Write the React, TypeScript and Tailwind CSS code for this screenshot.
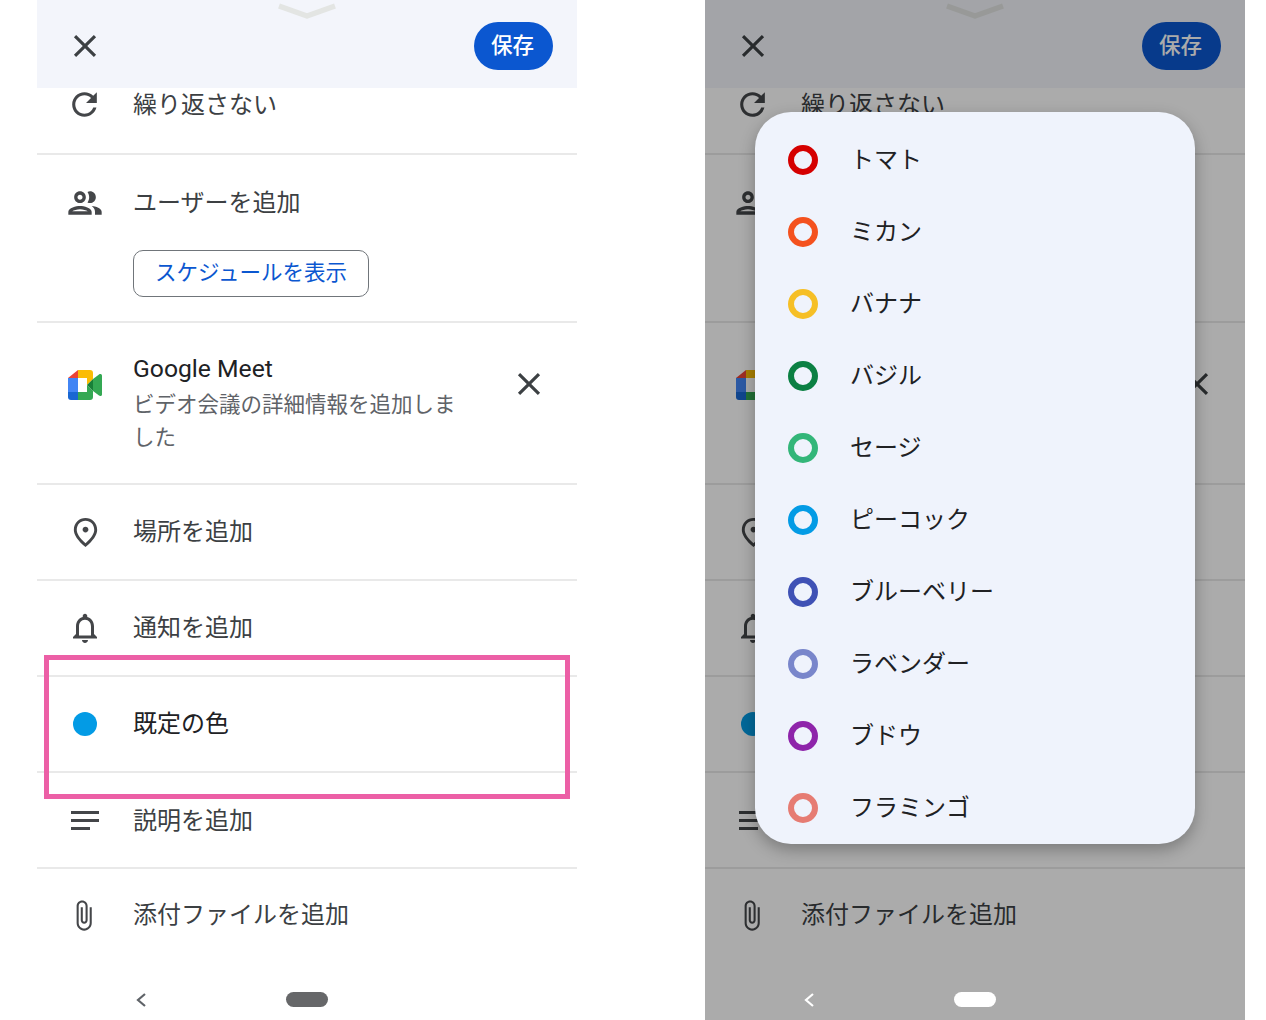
import React from "react";

const FONT = "font-['Roboto','Noto_Sans_CJK_JP',sans-serif]";

function Mi({ d, size, className = "" }: { d: string; size: number; className?: string }) {
  return (
    <svg width={size} height={size} viewBox="0 0 24 24" fill="currentColor" className={`shrink-0 ${className}`}>
      <path d={d} />
    </svg>
  );
}

const P = {
  close: "M19 6.41L17.59 5 12 10.59 6.41 5 5 6.41 10.59 12 5 17.59 6.41 19 12 13.41 17.59 19 19 17.59 13.41 12z",
  refresh:
    "M17.65 6.35C16.2 4.9 14.21 4 12 4c-4.42 0-7.99 3.58-7.99 8s3.57 8 7.99 8c3.73 0 6.84-2.55 7.73-6h-2.08c-.82 2.33-3.04 4-5.65 4-3.31 0-6-2.69-6-6s2.69-6 6-6c1.66 0 3.14.69 4.22 1.78L13 11h7V4l-2.35 2.35z",
  group:
    "M9 13.75c-2.34 0-7 1.17-7 3.5V19h14v-1.75c0-2.33-4.66-3.5-7-3.5zM4.34 17c.84-.58 2.87-1.25 4.66-1.25s3.82.67 4.66 1.25H4.34zM9 12c1.93 0 3.5-1.57 3.5-3.5S10.93 5 9 5 5.5 6.57 5.5 8.5 7.07 12 9 12zm0-5c.83 0 1.5.67 1.5 1.5S9.83 10 9 10s-1.5-.67-1.5-1.5S8.17 7 9 7zm7.04 6.81c1.16.84 1.96 1.96 1.96 3.44V19h4v-1.75c0-2.02-3.5-3.17-5.96-3.44zM15 12c1.93 0 3.5-1.57 3.5-3.5S16.93 5 15 5c-.54 0-1.04.13-1.5.35.63.89 1 1.98 1 3.15s-.37 2.26-1 3.15c.46.22.96.35 1.5.35z",
  place:
    "M12 12c-1.1 0-2-.9-2-2s.9-2 2-2 2 .9 2 2-.9 2-2 2zm6-1.8C18 6.57 15.35 4 12 4s-6 2.57-6 6.2c0 2.34 1.95 5.44 6 9.14 4.05-3.7 6-6.8 6-9.14zM12 2c4.2 0 8 3.22 8 8.2 0 3.32-2.67 7.25-8 11.8-5.33-4.55-8-8.48-8-11.8C4 5.22 7.8 2 12 2z",
  bell:
    "M12 22c1.1 0 2-.9 2-2h-4c0 1.1.9 2 2 2zm6-6v-5c0-3.07-1.63-5.64-4.5-6.32V4c0-.83-.67-1.5-1.5-1.5s-1.5.67-1.5 1.5v.68C7.64 5.36 6 7.92 6 11v5l-2 2v1h16v-1l-2-2zm-2 1H8v-6c0-2.48 1.51-4.5 4-4.5s4 2.02 4 4.5v6z",
  clip:
    "M16.5 6v11.5c0 2.21-1.79 4-4 4s-4-1.79-4-4V5c0-1.38 1.12-2.5 2.5-2.5s2.5 1.12 2.5 2.5v10.5c0 .55-.45 1-1 1s-1-.45-1-1V6H10v9.5c0 1.38 1.12 2.5 2.5 2.5s2.5-1.12 2.5-2.5V5c0-2.21-1.79-4-4-4S7 2.79 7 5v12.5c0 3.04 2.46 5.5 5.5 5.5s5.5-2.46 5.5-5.5V6h-1.5z",
};

function MeetLogo() {
  return (
    <svg width="34" height="30" viewBox="0 0 34 30" className="shrink-0">
      <path d="M10 0v8H0z" fill="#ea4335" />
      <path d="M0 8h10v14H0z" fill="#4285f4" />
      <path d="M0 22h10v8H3a3 3 0 0 1-3-3z" fill="#1967d2" />
      <path d="M10 0h12a3 3 0 0 1 3 3v6l-6 6V8h-9z" fill="#fbbc04" />
      <path d="M10 22h9v-7l6 6v6a3 3 0 0 1-3 3H10z" fill="#34a853" />
      <path d="M19 15l6-6v12z" fill="#188038" />
      <path d="M25 9l6-4.6c1-.7 3-.3 3 1.2v18.8c0 1.5-2 1.9-3 1.2L25 21z" fill="#34a853" />
    </svg>
  );
}

function Row({ icon, children }: { icon: React.ReactNode; children: React.ReactNode }) {
  return (
    <div className="flex h-[96px] items-center border-b-2 border-[#e9e9e9]">
      <div className="flex w-[96px] justify-center text-[#444649]">{icon}</div>
      <div className="text-[24px] leading-[32px] text-[#3c4043]">{children}</div>
    </div>
  );
}

const colours: [string, string][] = [
  ["トマト", "border-[#d50000]"],
  ["ミカン", "border-[#f4511e]"],
  ["バナナ", "border-[#f6bf26]"],
  ["バジル", "border-[#0b8043]"],
  ["セージ", "border-[#33b679]"],
  ["ピーコック", "border-[#039be5]"],
  ["ブルーベリー", "border-[#3f51b5]"],
  ["ラベンダー", "border-[#7986cb]"],
  ["ブドウ", "border-[#8e24aa]"],
  ["フラミンゴ", "border-[#e67c73]"],
];

function Screen({ dim }: { dim?: boolean }) {
  return (
    <div className="relative h-[1020px] w-[540px] shrink-0 overflow-hidden bg-white">
      {/* header */}
      <div className="relative flex h-[88px] items-center justify-between bg-[#f3f5fb] pl-[29px] pr-[24px] pt-[4px]">
        <svg width="60" height="18" viewBox="0 0 60 18" fill="none" className="absolute left-[240px] top-[2px]">
          <path d="M2 4l28 10L58 4" stroke="#e3e5e3" strokeWidth="5.5" strokeLinejoin="round" />
        </svg>
        <Mi d={P.close} size={38} className="text-[#3c4043]" />
        <div className="flex h-[48px] w-[79px] items-center justify-center rounded-full bg-[#0b57d0] pr-[2px] text-[21.5px] font-medium text-white">
          保存
        </div>
      </div>

      {/* repeat */}
      <div className="flex h-[67px] border-b-2 border-[#e9e9e9]">
        <div className="flex h-[32px] w-[96px] items-center justify-center pr-[2px] pt-[1px] text-[#444649]">
          <Mi d={P.refresh} size={37} />
        </div>
        <div className="pt-[1px] text-[24px] leading-[32px] text-[#3c4043]">繰り返さない</div>
      </div>

      {/* users */}
      <div className="flex h-[168px] border-b-2 border-[#e9e9e9] pt-[32px]">
        <div className="flex h-[32px] w-[96px] items-center justify-center text-[#444649]">
          <Mi d={P.group} size={40} />
        </div>
        <div>
          <div className="text-[24px] leading-[32px] text-[#3c4043]">ユーザーを追加</div>
          <div className="mt-[31px] flex h-[47px] w-[236px] items-center justify-center rounded-[10px] border border-[#70757a] text-[21.5px] text-[#0b57d0]">
            スケジュールを表示
          </div>
        </div>
      </div>

      {/* meet */}
      <div className="flex h-[162px] border-b-2 border-[#e9e9e9] pt-[30px]">
        <div className="flex w-[96px] justify-center pt-[17px]">
          <MeetLogo />
        </div>
        <div className="w-[330px]">
          <div className="text-[24.7px] leading-[32px] text-[#202124]">Google Meet</div>
          <div className="mt-[3px] text-[21.5px] leading-[33px] text-[#5f6368]">
            ビデオ会議の詳細情報を追加しました
          </div>
        </div>
        <div className="ml-[47px] pt-[12px] text-[#3c4043]">
          <Mi d={P.close} size={38} />
        </div>
      </div>

      <Row icon={<Mi d={P.place} size={35} />}>場所を追加</Row>
      <Row icon={<Mi d={P.bell} size={36} />}>通知を追加</Row>
      <Row icon={<div className="h-[24px] w-[24px] rounded-full bg-[#039be5]" />}>
        <span className="text-[#202124]">既定の色</span>
      </Row>
      <Row
        icon={
          <svg width="28" height="19" viewBox="0 0 28 19" fill="currentColor" className="mt-[1px]">
            <rect width="28" height="3" />
            <rect y="8" width="28" height="3" />
            <rect y="16" width="19" height="3" />
          </svg>
        }
      >
        <span className="relative top-[1px]">説明を追加</span>
      </Row>
      <div className="flex h-[93px] items-center pb-[1px]">
        <div className="flex w-[96px] justify-center pr-[3px] text-[#444649]">
          <Mi d={P.clip} size={33} />
        </div>
        <div className="text-[24px] leading-[32px] text-[#3c4043]">添付ファイルを追加</div>
      </div>

      {!dim && <NavBar dark />}

      {!dim && (
        <div className="absolute left-[7px] top-[655px] h-[144px] w-[526px] border-[5px] border-[#ec5fa6]" />
      )}

      {dim && (
        <>
          <div className="absolute inset-0 bg-black/[0.33]" />
          <div className="absolute bottom-0 left-0 w-full">
            <NavBar />
          </div>
          <div className="absolute left-[50px] top-[112px] w-[440px] rounded-[36px] bg-[#eff3fc] pt-[12px] shadow-[0_6px_16px_rgba(0,0,0,0.28)]">
            {colours.map(([name, cls]) => (
              <div key={name} className="flex h-[72px] items-center gap-[32px] pl-[33px]">
                <div className={`h-[30px] w-[30px] rounded-full border-[6px] ${cls}`} />
                <div className="text-[24px] leading-[32px] text-[#202124]">{name}</div>
              </div>
            ))}
          </div>
        </>
      )}
    </div>
  );
}

function NavBar({ dark }: { dark?: boolean }) {
  return (
    <div className="flex h-[58px] items-start pl-[98px] pt-[30px]">
      <svg width="12" height="16" viewBox="0 0 12 16" fill="none">
        <path d="M10 2L3 8l7 6" stroke={dark ? "#5f6368" : "#ffffff"} strokeWidth="2.2" />
      </svg>
      <div className={`ml-[139px] h-[15px] w-[42px] rounded-full ${dark ? "bg-[#666769]" : "bg-white"}`} />
    </div>
  );
}

export default function App() {
  return (
    <div className={`flex h-[1020px] w-[1266px] gap-[128px] overflow-hidden bg-white pl-[37px] ${FONT}`}>
      <Screen />
      <Screen dim />
    </div>
  );
}
